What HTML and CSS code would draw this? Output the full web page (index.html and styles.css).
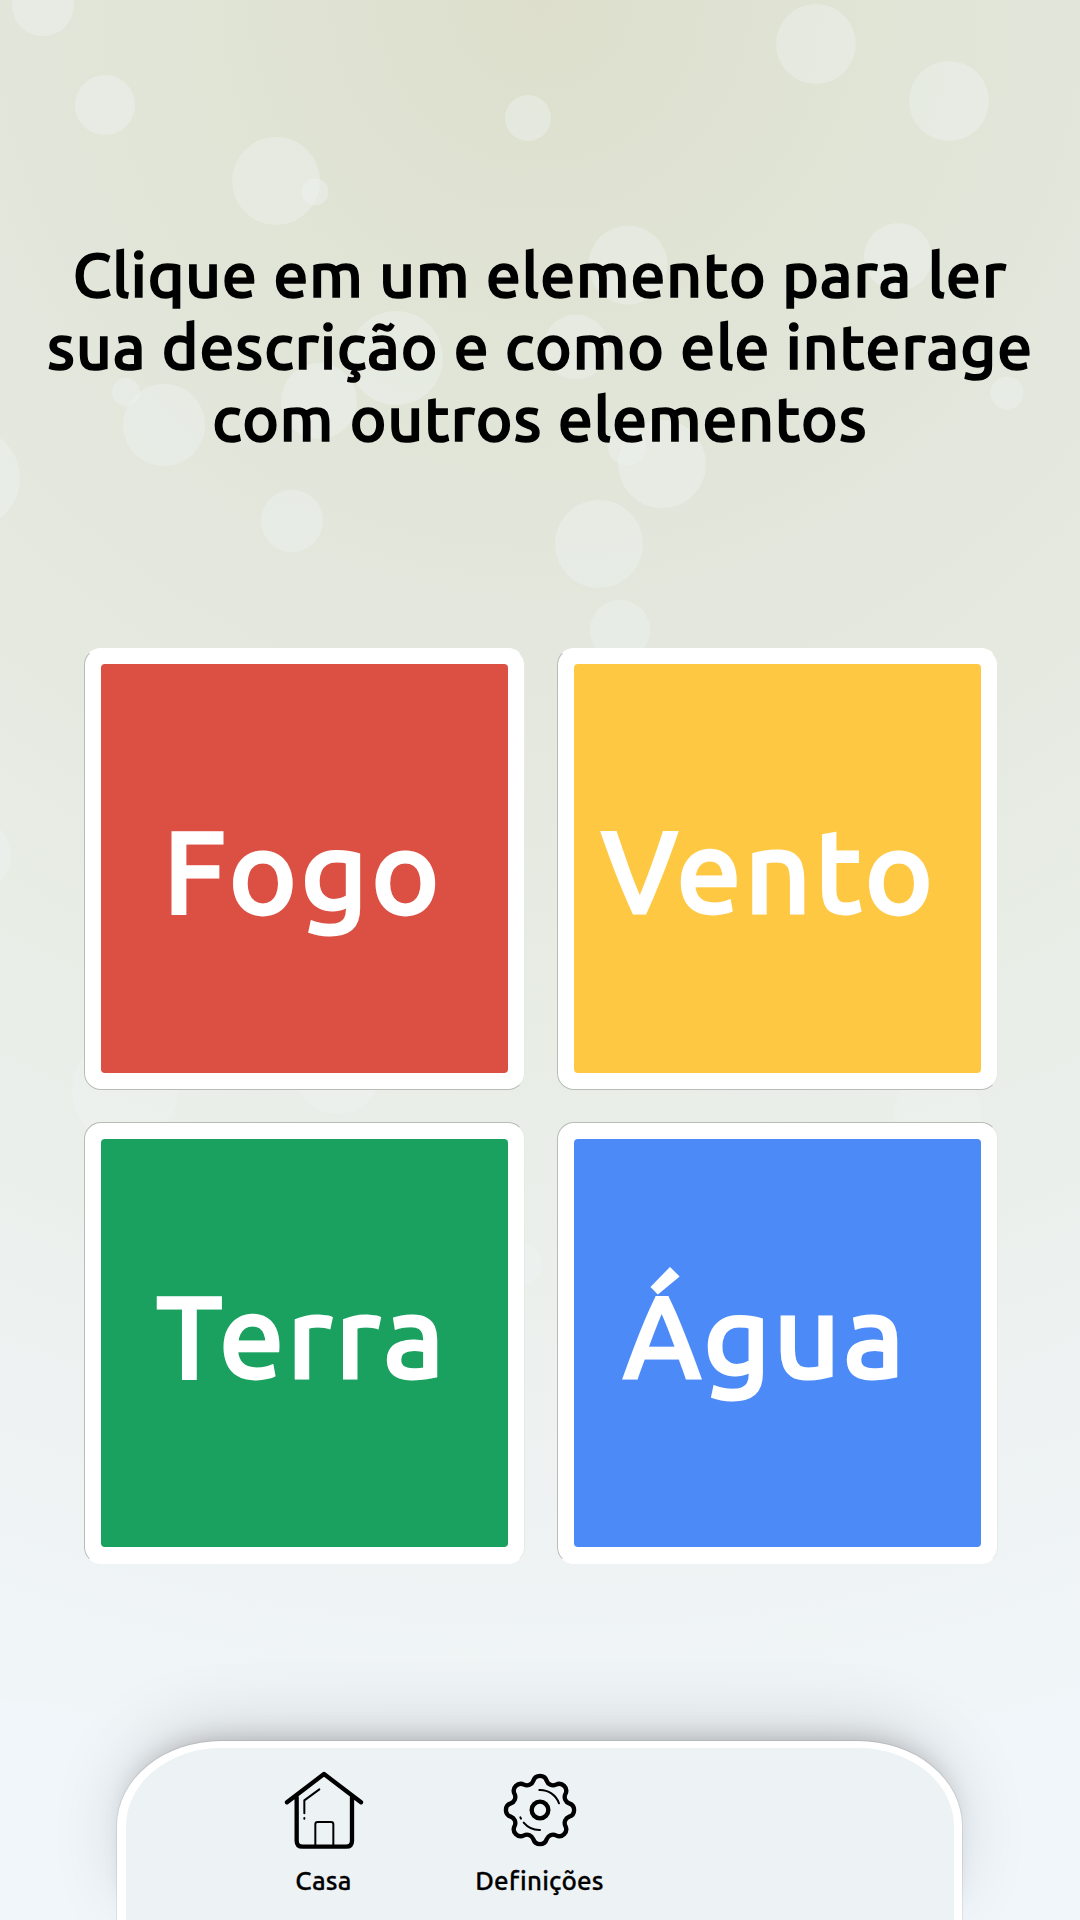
FILE: index.html
```html
<!DOCTYPE html>
<html lang="pt">
<head>
<meta charset="utf-8">
<title>Elementos</title>
<link rel="stylesheet" href="styles.css">
</head>
<body>
<svg class="bubbles" viewBox="0 0 1080 1920" aria-hidden="true">
  <circle cx="43" cy="5" r="31"/><circle cx="816" cy="44" r="40"/><circle cx="949" cy="101" r="40"/>
  <circle cx="105" cy="105" r="30"/><circle cx="528" cy="118" r="23"/><circle cx="276" cy="181" r="44"/>
  <circle cx="315" cy="192" r="13.5"/><circle cx="628" cy="265" r="39.5"/><circle cx="898" cy="257" r="34"/>
  <circle cx="396" cy="358" r="47"/><circle cx="576" cy="347" r="32.5"/><circle cx="319" cy="401" r="38"/>
  <circle cx="126" cy="392" r="14"/><circle cx="164" cy="425" r="41"/><circle cx="1007" cy="393" r="16.5"/>
  <circle cx="627" cy="446" r="19.5"/><circle cx="662" cy="464" r="44"/><circle cx="-30" cy="478" r="50"/>
  <circle cx="292" cy="521" r="31"/><circle cx="599" cy="544" r="44"/><circle cx="620" cy="630" r="30"/>
  <circle cx="125" cy="1090" r="53"/><circle cx="338" cy="1070" r="44"/><circle cx="938" cy="1114" r="44"/>
  <circle cx="522" cy="1264" r="20"/><circle cx="1029" cy="1469" r="14.5"/><circle cx="-25" cy="855" r="36"/>
  <circle cx="-20" cy="1493" r="23"/><circle cx="25" cy="1655" r="47"/><circle cx="802" cy="1630" r="33"/>
  <circle cx="460" cy="1679" r="38"/>
</svg>
<main class="page">
  <h1 class="title">
    <span class="line">Clique em um elemento para ler</span>
    <span class="line">sua descrição e como ele interage</span>
    <span class="line">com outros elementos</span>
  </h1>
  <section class="grid">
    <button class="card fire"><span>Fogo</span></button>
    <button class="card wind"><span>Vento</span></button>
    <button class="card earth"><span>Terra</span></button>
    <button class="card water"><span>Água</span></button>
  </section>
  <nav class="dock">
    <a class="item">
      <svg class="icon" viewBox="72 90 240 240">
        <g fill="none" stroke="#000" stroke-linecap="round" stroke-linejoin="round">
          <path stroke-width="13" d="M81 187 192 102 303 187M110 172V302Q110 320 128 320H258Q276 320 276 302V172"/>
          <path stroke-width="6" d="M166 318V253Q166 246 173 246H213Q220 246 220 253V318M178 148 133 181V220M133 234V236"/>
        </g>
      </svg>
      <span>Casa</span>
    </a>
    <a class="item">
      <svg class="icon" viewBox="-120 -120 240 240">
        <g fill="none" stroke="#000" stroke-linecap="round" stroke-linejoin="round">
          <path stroke-width="13" d="M-20-87.7A21 21 0 0 1 20-87.7A20 20 0 0 0 47.9-76.2A21 21 0 0 1 76.2-47.9A20 20 0 0 0 87.7-20A21 21 0 0 1 87.7 20A20 20 0 0 0 76.2 47.9A21 21 0 0 1 47.9 76.2A20 20 0 0 0 20 87.7A21 21 0 0 1-20 87.7A20 20 0 0 0-47.9 76.2A21 21 0 0 1-76.2 47.9A20 20 0 0 0-87.7 20A21 21 0 0 1-87.7-20A20 20 0 0 0-76.2-47.9A21 21 0 0 1-47.9-76.2A20 20 0 0 0-20-87.7Z"/>
          <circle r="25" stroke-width="13"/>
          <path stroke-width="6" d="M-2-60A60 60 0 0 1 57-20M0 60A62 62 0 0 1-49 38M-59 22-57 26"/>
        </g>
      </svg>
      <span>Definições</span>
    </a>
  </nav>
</main>
</body>
</html>
```
FILE: styles.css
```css
* { box-sizing: border-box; }
body {
  margin: 0;
  width: 1080px;
  height: 1920px;
  overflow: hidden;
  position: relative;
  font-family: Ubuntu, "Noto Sans", sans-serif;
  background: radial-gradient(ellipse 1900px 1920px at 50% 0, #dddfcc 0%, #e1e5d7 20%, #e3e7dd 34%, #e8ede6 55%, #edf1f0 74%, #f1f6fa 94%);
}
.bubbles { position: absolute; inset: 0; width: 1080px; height: 1920px; fill: #eff5f5; fill-opacity: .38; }
.page { position: relative; height: 1920px; display: flex; flex-direction: column; align-items: center; }
.title {
  flex: none; margin: 0; padding-top: 238px; height: 648px;
  font-size: 62px; font-weight: 500; line-height: 72px; letter-spacing: 1px;
  -webkit-text-stroke: 1.6px #000; text-align: center; white-space: nowrap;
}
.line { display: block; }
.grid { flex: none; display: grid; grid-template-columns: 441px 441px; grid-auto-rows: 442px; gap: 32px; margin-left: 2px; }
.card {
  display: flex; align-items: center; justify-content: center;
  border: 1px solid #fff; border-left-color: #b7bcb6; border-right-color: #e6e9e4; border-radius: 17px; background: #fff; padding: 15px 16px 16px;
  font: inherit; font-size: 116px; font-weight: 500; color: #fff;
  -webkit-text-stroke: 2.8px #fff;
}
.card span { width: 100%; height: 100%; border-radius: 4px; text-align: left; }
.fire, .wind { border-bottom-color: #b7bcb6; letter-spacing: 3.2px; }
.earth, .water { border-top-color: #b7bcb6; padding-top: 16px; letter-spacing: 2.8px; }
.fire span, .wind span { line-height: 413px; }
.earth span, .water span { line-height: 392px; }
.fire span { background: #dc4f43; padding-left: 62px; }
.wind span { background: #ffc843; padding-left: 27px; }
.earth span { background: #1aa15f; padding-left: 55px; }
.water span { background: #4c8bf7; padding-left: 49px; }
.dock {
  width: 845px; height: 180px; margin: 177px 2px 0 0; flex: none;
  border: solid #fff; border-width: 7px 8px 0 9px; border-radius: 104px 104px 0 0 / 85px 85px 0 0;
  background: #edf2f4;
  box-shadow: 0 0 0 1px rgba(0,0,0,.07), 0 -14px 26px -14px rgba(0,0,0,.22), 0 -18px 80px -16px rgba(0,0,0,.19);
  display: flex; padding: 22px 0 0 90px;
}
.item {
  width: 216px; display: flex; flex-direction: column; align-items: center; gap: 13px;
  font-size: 26px; font-weight: 500; line-height: 36px; letter-spacing: .2px; -webkit-text-stroke: .3px #000;
}
.icon { width: 80px; height: 80px; }
```
